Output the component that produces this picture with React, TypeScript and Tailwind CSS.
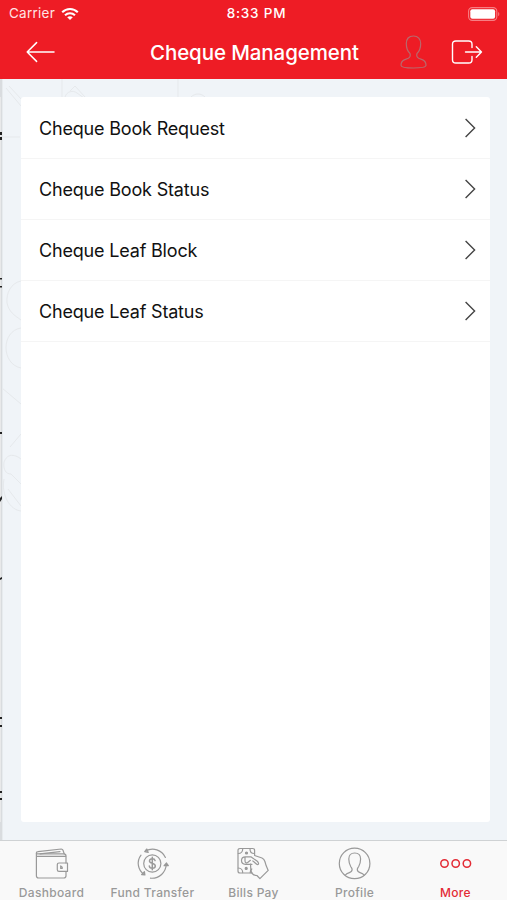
import type { ReactNode } from 'react';

const menuItems = ['Cheque Book Request', 'Cheque Book Status', 'Cheque Leaf Block', 'Cheque Leaf Status'];

function WifiIcon() {
  return (
    <svg width="18" height="14" viewBox="0 0 18 14" fill="none" stroke="#fff" strokeWidth="2.1">
      <path d="M1.2 5.2C5.6.9 12.4.9 16.8 5.2" />
      <path d="M4 8.2c2.9-2.7 7.1-2.7 10 0" />
      <path d="M6.2 10.2c1.7-1.4 3.9-1.4 5.6 0L9 13z" fill="#fff" stroke="none" />
    </svg>
  );
}

function BatteryIcon() {
  return (
    <svg width="32" height="14" viewBox="0 0 32 14" fill="none">
      <rect x="0.6" y="0.6" width="28.2" height="12.8" rx="3.6" stroke="#f77e83" strokeWidth="1.1" />
      <rect x="2.3" y="2.2" width="24.8" height="9.6" rx="2" fill="#fff" />
      <path d="M30.2 4.9c1.5.6 1.5 3.6 0 4.2z" fill="#f77e83" />
    </svg>
  );
}

function BackIcon() {
  return (
    <svg width="30" height="22" viewBox="0 0 30 22" fill="none" stroke="#fff" strokeWidth="1.5" strokeLinecap="round" strokeLinejoin="round">
      <path d="M28 11H1.2M10.6 1.6 1.2 11l9.4 9.4" />
    </svg>
  );
}

function UserIcon() {
  return (
    <svg width="27" height="34" viewBox="0 0 27 34" fill="none" stroke="#b9686c" strokeWidth="1.2" strokeLinejoin="round">
      <path d="M13.5 1C9 1 6.3 4 6.3 8.6c0 4.5 1.2 7.7 3.7 9.9.7 2.3.2 3.8-1.7 4.7l-4 1.7C2 26 1 27.5 1 30.2 1 32 5.8 33 13.5 33S26 32 26 30.2c0-2.700-1-4.200-3.300-5.300l-4-1.700c-1.900-.9-2.400-2.400-1.700-4.700 2.500-2.200 3.700-5.400 3.700-9.900C20.700 4 18 1 13.500 1z" />
    </svg>
  );
}

function LogoutIcon() {
  return (
    <svg width="32" height="24" viewBox="0 0 32 24" fill="none" stroke="#fff" strokeWidth="1.4" strokeLinecap="round" strokeLinejoin="round">
      <path d="M21 7.6V4.3C21 2.2 19.8 1 17.7 1H4.8C2.7 1 1.5 2.2 1.5 4.3v15.4c0 2.1 1.2 3.3 3.3 3.3h12.9c2.1 0 3.3-1.2 3.3-3.3v-3.3" />
      <path d="M14.5 12h16M25.3 6.8l5.2 5.2-5.2 5.2" />
    </svg>
  );
}

function ChevronIcon() {
  return (
    <svg width="12" height="20" viewBox="0 0 12 20" fill="none" stroke="#444" strokeWidth="1.4">
      <path d="m1.6 1 9 9-9 9" />
    </svg>
  );
}

function TabIcon({ children }: { children: ReactNode }) {
  return (
    <svg width="35" height="34" viewBox="0 0 35 34" fill="none" stroke="currentColor" strokeWidth="1.2" strokeLinecap="round" strokeLinejoin="round">
      {children}
    </svg>
  );
}

function WalletIcon() {
  return (
    <TabIcon>
      <path d="M32 16V9c0-1.400-.8-2.200-2.200-2.200H3.700c-1 0-1.300-.3-1.300-.8v22.800c0 1.400.8 2.200 2.200 2.200h25.200c1.400 0 2.200-.8 2.200-2.200v-4" />
      <path d="M2.400 6c0-1 .5-1.200 1.600-1.300L27.300 2c1 0 1.400.4 1.700 1.300l1.200 3.500M6 6.800l20-2.200M2.600 9.300h29" />
      <path d="M33.500 16v8.400H25c-1.200 0-1.700-.6-1.700-1.600v-5.200c0-1 .5-1.600 1.700-1.600z" />
      <path d="M26.700 19v2.500h1.500v-1.200z" />
    </TabIcon>
  );
}

function TransferIcon() {
  return (
    <TabIcon>
      <circle cx="17.3" cy="16.5" r="8.6" />
      <path d="M20.1 13.6c-.3-1.200-1.300-1.800-2.800-1.800-1.700 0-2.800.9-2.800 2.200 0 3.100 5.800 1.700 5.800 5 0 1.400-1.200 2.300-3 2.300-1.700 0-2.900-.8-3-2.300M17.3 10.200v12.600" strokeWidth="1.5" />
      <path d="M10.400 4.200c7.400-4.500 16.600-1.200 20 6.200M11.800 2l-2.100 2.600 3.500.9z" />
      <path d="M6 8.200c-4.600 6-3.400 14.700 3.200 19.400M6.600 27.600l3.300.3-.5-3.300z" />
      <path d="M15.500 31.200c9 .6 15.300-5.900 15.900-14.200M29.100 18.700l2.400-2.700 1.800 2.700z" />
    </TabIcon>
  );
}

function BillsIcon() {
  return (
    <TabIcon>
      <path d="M18.600 8V3.500c0-1.300-.7-2-2-2H4c-1.300 0-2 .7-2 2V24c0 1.300.7 2 2 2h12.200" />
      <path d="M2.300 6.500c2.800 0 4.400-2 4.400-4.600M18.300 6.500C15.600 6.500 14 4.500 14 1.900M2.300 21c2.800 0 4.400 2 4.400 4.600M14.200 25.700c0-1.600.6-2.800 1.600-3.700" />
      <path d="M18.600 8.500 26 11c1.500.6 2.400 1.800 2.900 3.500l1.300 4.300 2 4.600-8.300 8.200-3-3.100c-3.700-.2-6-2.300-6.100-6.600l-.3-4.700" />
      <path d="M16 17.300H9.500c-2.400 0-4-1.600-4-3.700s1.600-3.700 4-3.700h5.700l5.800 4.200c1.700 1.300 2.200 3.500.5 3.500-1.300 0-2.700-2.500-4.700-3.600M9 10.200v3.500c0 2 1.300 3 3 1.600l2.400-2" />
      <circle cx="10.500" cy="6" r="1" fill="currentColor" />
      <circle cx="10.200" cy="21.400" r="1" fill="currentColor" />
    </TabIcon>
  );
}

function ProfileIcon() {
  return (
    <TabIcon>
      <circle cx="17.6" cy="16.4" r="15.3" />
      <path d="M8.200 28.300c.9-1.400 2.100-2 4.200-2.700 2-.7 2.700-1.500 2.700-3 0-1.400-.6-1.800-1.300-2.900-1.300-2.300-2-4.800-2-7.700 0-3.700 2.100-6 5.900-6s5.900 2.300 5.900 6c0 2.900-.7 5.400-2 7.700-.7 1.100-1.300 1.500-1.300 2.900 0 1.500.7 2.300 2.700 3 2.100.7 3.300 1.300 4.200 2.700" />
    </TabIcon>
  );
}

function MoreIcon() {
  return (
    <TabIcon>
      <g strokeWidth="1.5">
        <circle cx="6.5" cy="16.5" r="3.7" />
        <circle cx="17.7" cy="16.5" r="3.7" />
        <circle cx="28.9" cy="16.5" r="3.7" />
      </g>
    </TabIcon>
  );
}

const tabs = [
  { label: 'Dashboard', icon: <WalletIcon /> },
  { label: 'Fund Transfer', icon: <TransferIcon /> },
  { label: 'Bills Pay', icon: <BillsIcon /> },
  { label: 'Profile', icon: <ProfileIcon /> },
  { label: 'More', icon: <MoreIcon />, active: true },
];

// Faint line pattern behind the card, plus the edge of the previous screen
function Backdrop() {
  return (
    <svg className="absolute inset-0" width="507" height="761" viewBox="0 79 507 761" fill="none">
      <g stroke="#e6e9ec" strokeWidth="1">
        <path d="m6 88 15 18M9 86l13 14M62 79v18M178 79v18M65 97c2-6 8-7 12-4l7 5M70 91l5-5 10 11M191 97c4-4 10-4 14 0M2 137h18" />
        <path d="M21 281c-10 2-15 12-14 22 2 9 7 12 14 17M21 328c-20 3-20 36 0 40M2 388l19 16M10 447l11-13M4 462c5-13 17-3 17-3M4 462c-1 8 2 12 7 12l10 10M4 479c-3 16 6 31 17 32M8 489l13 17" />
      </g>
      <path d="M0 79h2v761H0z" fill="#d9dcdf" />
      <path d="M0 97h1v725H0z" fill="#e8e9ea" />
      <path d="M2 79h1v761H2z" fill="#e7ebee" />
      <path
        d="M0 132h2v3H0zM0 137h2v3H0zM0 278h2v1.500H0zM0 286h2v1.500H0zM0 432h2v2H0zM0 498l2-2v3l-2 3zM0 578l2-1v2l-2 1zM0 717h2v2H0zM0 725h2v2H0zM0 791h2v2H0zM0 798h2v2H0z"
        fill="#222"
      />
    </svg>
  );
}

export default function App() {
  return (
    <div className="flex h-[900px] w-[507px] flex-col overflow-hidden bg-[#f0f4f8] font-['Inter','Liberation_Sans',sans-serif]">
      <header className="h-[79px] shrink-0 bg-[#ee1c25] text-white">
        <div className="grid h-[27px] grid-cols-3 items-center pt-px pr-[7px] pl-[9px] leading-none">
          <div className="flex items-center gap-[6px]">
            <span className="text-[13.5px] tracking-[0.25px] text-[#ffe3e4]">Carrier</span>
            <WifiIcon />
          </div>
          <span className="pl-[4px] text-center text-[13.5px] font-medium tracking-[0.8px]">8:33 PM</span>
          <div className="flex justify-end">
            <BatteryIcon />
          </div>
        </div>
        <div className="flex h-[50px] items-center pr-[24px] pl-[26px]">
          <BackIcon />
          <h1 className="ml-[94px] w-[210px] pt-[2px] whitespace-nowrap text-[20.5px] leading-none font-medium tracking-[-0.1px]">
            Cheque Management
          </h1>
          <div className="ml-auto flex items-center gap-[24px]">
            <UserIcon />
            <LogoutIcon />
          </div>
        </div>
      </header>

      <main className="relative h-[761px] shrink-0 pt-[18px] pr-[17px] pb-[18px] pl-[21px]">
        <Backdrop />
        <ul className="relative h-full rounded-[3px] bg-white pt-px">
          {menuItems.map((label) => (
            <li key={label} className="flex h-[61px] items-center justify-between border-b border-[#f5f5f5] pr-[14px] pl-[18px]">
              <span className="pt-[2px] text-[18px] leading-none tracking-[-0.18px] text-[#111]">{label}</span>
              <ChevronIcon />
            </li>
          ))}
        </ul>
      </main>

      <nav className="flex h-[60px] shrink-0 border-t border-[#cfd2d4] bg-[#f9f9f9] px-px">
        {tabs.map((tab) => (
          <button
            key={tab.label}
            className={`flex w-[101px] flex-col items-center pt-[6px] ${tab.active ? 'text-[#e32b35]' : 'text-[#999]'}`}
          >
            {tab.icon}
            <span className="mt-[6px] text-[12px] leading-[12px] font-medium tracking-[0.3px] whitespace-nowrap">{tab.label}</span>
          </button>
        ))}
      </nav>
    </div>
  );
}
